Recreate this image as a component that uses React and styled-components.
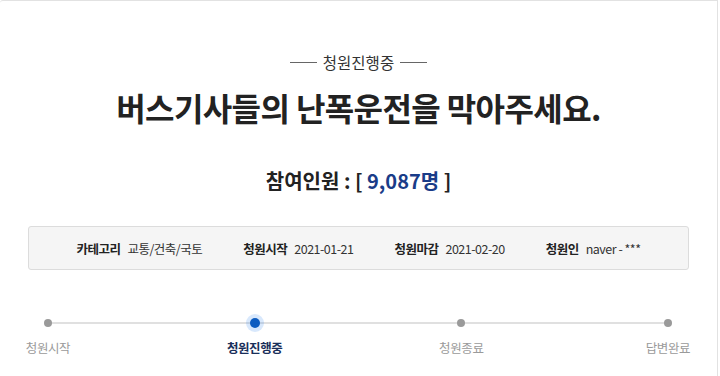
import React from 'react'
import styled, { createGlobalStyle } from 'styled-components'

const GlobalStyle = createGlobalStyle`
  * {
    margin: 0;
    padding: 0;
    box-sizing: border-box;
  }
  body {
    background: #fff;
    font-family: 'Noto Sans CJK KR', 'Noto Sans', sans-serif;
    color: #222;
  }
`

const Page = styled.section`
  width: 718px;
  height: 376px;
  border-top: 1px solid #e2e2e2;
  border-right: 1px solid #e2e2e2;
  border-top-left-radius: 3px;
  padding-top: 49px;
`

const Status = styled.div`
  display: flex;
  align-items: center;
  justify-content: center;
  gap: 6px;
  font-size: 15.5px;
  line-height: 24px;
  color: #333;
  &::before, &::after {
    content: '';
    width: 27px;
    height: 1px;
    background: #666;
  }
`

const Title = styled.h1`
  margin-top: 13px;
  text-align: center;
  font-size: 32px;
  line-height: 40px;
  font-weight: 700;
  letter-spacing: -0.6px;
  color: #222;
`

const Count = styled.p`
  margin-top: 40px;
  text-align: center;
  font-size: 20px;
  line-height: 28px;
  font-weight: 700;
  color: #222;
  span {
    color: #1a3c88;
  }
`

const InfoBox = styled.ul`
  margin: 31px 0 0 28px;
  width: 661px;
  height: 44px;
  display: flex;
  align-items: center;
  justify-content: center;
  gap: 41px;
  list-style: none;
  background: #f5f5f5;
  border: 1px solid #dcdcdc;
  border-radius: 3px;
  font-size: 12.5px;
`

const InfoItem = styled.li`
  display: flex;
  align-items: center;
  gap: 7px;
  letter-spacing: -0.5px;
  b {
    font-weight: 700;
    color: #222;
  }
  em {
    font-style: normal;
    color: #333;
  }
`

const Steps = styled.ol`
  position: relative;
  margin: 44px 0 0 18px;
  width: 680px;
  display: flex;
  justify-content: space-between;
  list-style: none;
  &::before {
    content: '';
    position: absolute;
    left: 30px;
    right: 30px;
    top: 8px;
    height: 2px;
    background: #e0e0e0;
  }
`

const Step = styled.li`
  position: relative;
  width: 60px;
  display: flex;
  flex-direction: column;
  align-items: center;
  gap: 7px;
`

const Dot = styled.span`
  width: 18px;
  height: 18px;
  border-radius: 50%;
  display: flex;
  align-items: center;
  justify-content: center;
  background: ${p => (p.$active ? 'rgba(40, 130, 240, 0.18)' : 'transparent')};
  &::after {
    content: '';
    width: ${p => (p.$active ? '10px' : '8px')};
    height: ${p => (p.$active ? '10px' : '8px')};
    border-radius: 50%;
    background: ${p => (p.$active ? '#0d5cc0' : '#9a9a9a')};
  }
`

const StepLabel = styled.span`
  font-size: 12.5px;
  line-height: 18px;
  white-space: nowrap;
  letter-spacing: -0.4px;
  color: ${p => (p.$active ? '#1a2f5a' : '#9a9a9a')};
  font-weight: ${p => (p.$active ? 700 : 400)};
`

const info = [
  ['카테고리', '교통/건축/국토'],
  ['청원시작', '2021-01-21'],
  ['청원마감', '2021-02-20'],
  ['청원인', 'naver - ***'],
]

const steps = ['청원시작', '청원진행중', '청원종료', '답변완료']

export default function App() {
  return (
    <Page>
      <GlobalStyle />
      <Status>청원진행중</Status>
      <Title>버스기사들의 난폭운전을 막아주세요.</Title>
      <Count>참여인원 : [ <span>9,087명</span> ]</Count>
      <InfoBox>
        {info.map(([label, value]) => (
          <InfoItem key={label}>
            <b>{label}</b>
            <em>{value}</em>
          </InfoItem>
        ))}
      </InfoBox>
      <Steps>
        {steps.map((s, i) => (
          <Step key={s}>
            <Dot $active={i === 1} />
            <StepLabel $active={i === 1}>{s}</StepLabel>
          </Step>
        ))}
      </Steps>
    </Page>
  )
}
